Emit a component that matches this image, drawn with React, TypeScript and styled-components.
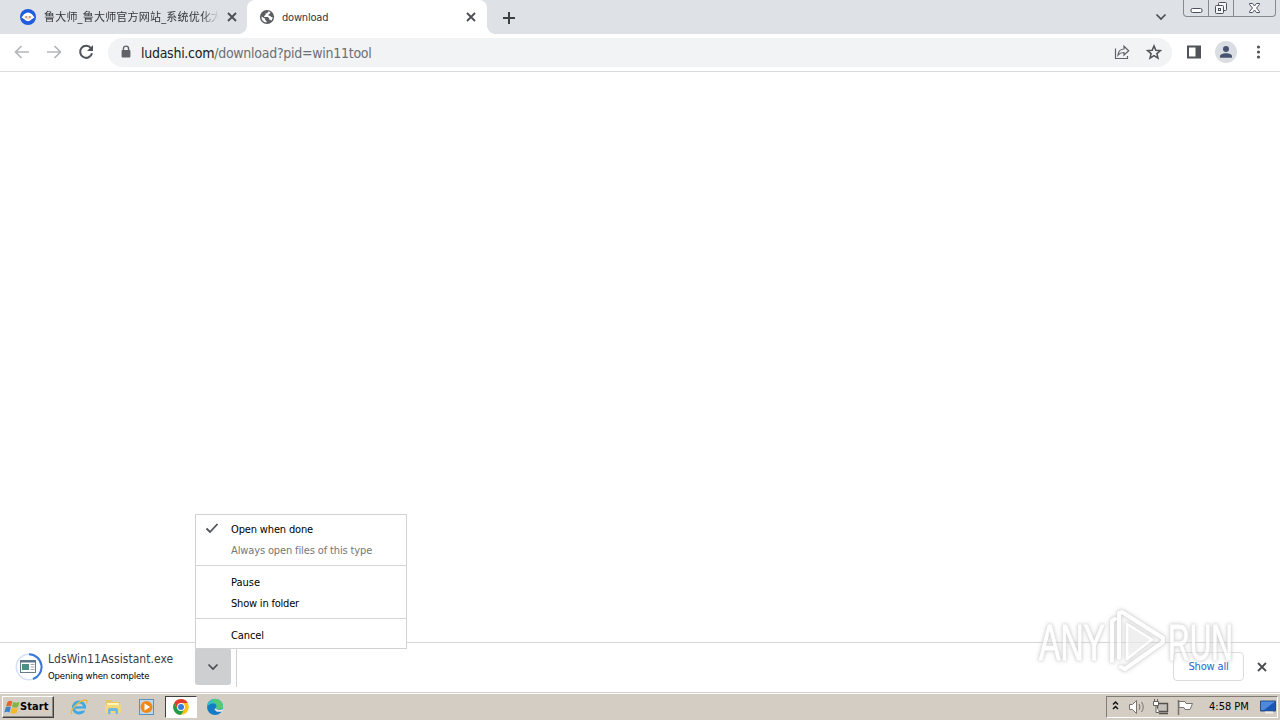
import React from 'react'
import styled, { createGlobalStyle, css } from 'styled-components'

const GlobalStyle = createGlobalStyle`
  * {
    box-sizing: border-box;
  }
  body {
    margin: 0;
    overflow: hidden;
    background: #ffffff;
  }
  svg {
    flex-shrink: 0;
  }
`

/* Desktop */
const Desktop = styled.div`
  position: relative;
  display: flex;
  flex-direction: column;
  width: 1280px;
  height: 720px;
  font-family: 'DejaVu Sans Condensed', 'DejaVu Sans', 'Noto Sans CJK SC', sans-serif;
  font-stretch: condensed;
  color: #000000;
  background: #ffffff;
`
const Label = styled.span<{ size?: number; track?: number; color?: string }>`
  font-size: ${(p) => p.size || 11}px;
  letter-spacing: ${(p) => p.track || 0}px;
  color: ${(p) => p.color || 'inherit'};
  line-height: 16px;
  white-space: nowrap;
`
const Spacer = styled.div`
  flex: 1;
`

/* Tab strip */
const TabStrip = styled.div`
  display: flex;
  height: 34px;
  background: #dee1e6;
`
const Tab = styled.div<{ active?: boolean }>`
  position: relative;
  display: flex;
  align-items: center;
  width: ${(p) => (p.active ? 240 : 247)}px;
  height: 34px;
  padding: 0 ${(p) => (p.active ? 11 : 10)}px 0 ${(p) => (p.active ? 12 : 20)}px;
  ${(p) =>
    p.active &&
    css`
      background: #ffffff;
      border-radius: 8px 8px 0 0;
      &::before,
      &::after {
        content: '';
        position: absolute;
        bottom: 0;
        width: 8px;
        height: 8px;
      }
      &::before {
        left: -8px;
        background: radial-gradient(circle at 0 0, #dee1e6 7.5px, #ffffff 8px);
      }
      &::after {
        right: -8px;
        background: radial-gradient(circle at 100% 0, #dee1e6 7.5px, #ffffff 8px);
      }
    `}
`
const TabTitle = styled.div<{ fade?: boolean }>`
  flex: 1;
  display: flex;
  min-width: 0;
  margin: 0 8px 0 ${(p) => (p.fade ? 8 : 7)}px;
  padding-top: ${(p) => (p.fade ? 2 : 1)}px;
  color: #33363a;
  ${(p) => p.fade && 'mask-image: linear-gradient(90deg, #000 90%, transparent);'}
`
const NewTab = styled.div`
  display: flex;
  align-items: center;
  padding-left: 14px;
`
const TabSearch = styled.div`
  display: flex;
  align-items: center;
  margin-right: 16px;
`
const WindowButtons = styled.div`
  display: flex;
  width: 93px;
  height: 17px;
  margin-right: 4px;
  border: 1px solid #868990;
  border-top: 0;
  border-radius: 0 0 4px 4px;
`
const WindowButton = styled.div<{ width: number }>`
  display: flex;
  align-items: center;
  justify-content: center;
  width: ${(p) => p.width}px;
  & + & {
    border-left: 1px solid #868990;
  }
`

/* Toolbar */
const Toolbar = styled.div`
  display: flex;
  align-items: center;
  height: 38px;
  padding: 0 12px 0 12px;
  border-bottom: 1px solid #d9dbde;
  svg {
    margin-bottom: 2px;
  }
`
const NavIcons = styled.div`
  display: flex;
  gap: 12px;
  width: 96px;
`
const Omnibox = styled.div`
  display: flex;
  align-items: center;
  width: 1064px;
  height: 29px;
  padding: 0 8px 0 10px;
  border-radius: 15px;
  background: #f1f3f4;
`
const Url = styled.div`
  flex: 1;
  display: flex;
  margin-left: 7px;
`
const OmniboxIcons = styled.div`
  display: flex;
  gap: 12px;
`
const ToolbarIcons = styled.div`
  display: flex;
  align-items: center;
  gap: 11px;
  margin-left: 12px;
`

const Page = styled.main`
  flex: 1;
`

/* Download shelf */
const Shelf = styled.div`
  display: flex;
  align-items: center;
  height: 50px;
  padding: 0 13px 2px 0;
  border-top: 1px solid #d5d5d5;
`
const Download = styled.div`
  display: flex;
  align-items: center;
  width: 237px;
  height: 41px;
  padding-left: 15px;
  border-right: 1px solid #d0d0d0;
`
const DownloadText = styled.div`
  display: flex;
  flex-direction: column;
  gap: 1px;
  width: 152px;
  padding: 2px 0 0 5px;
`
const MenuButton = styled.div`
  display: flex;
  align-items: center;
  justify-content: center;
  width: 36px;
  height: 37px;
  border-radius: 3px;
  background: #cecfd0;
`
const ShowAll = styled.div`
  display: flex;
  align-items: center;
  justify-content: center;
  width: 71px;
  height: 29px;
  margin-right: 13px;
  border: 1px solid #dadce0;
  border-radius: 4px;
`

/* Context menu over the shelf */
const Menu = styled.div`
  position: absolute;
  left: 195px;
  top: 514px;
  width: 212px;
  height: 135px;
  padding-top: 4px;
  border: 1px solid #d2d2d2;
  background: #ffffff;
`
const MenuItem = styled.div`
  display: flex;
  align-items: center;
  height: 21px;
`
const Check = styled.div`
  display: flex;
  width: 35px;
  padding: 0 0 3px 9px;
`
const MenuLine = styled.div`
  height: 1px;
  margin: 4px 0 6px;
  background: #d5d5d5;
`

/* Taskbar */
const Taskbar = styled.div`
  display: flex;
  align-items: flex-start;
  height: 28px;
  padding: 3px 2px 0;
  border-top: 1px solid #d4d0c8;
  background: #d4cdc4;
  box-shadow: inset 0 1px #ffffff;
`
const Start = styled.div`
  display: flex;
  align-items: center;
  width: 52px;
  height: 22px;
  padding-left: 1px;
  border: 1px solid;
  border-color: #ffffff #404040 #404040 #ffffff;
  box-shadow: inset -1px -1px #8c8780;
  font-weight: bold;
`
const QuickLaunch = styled.div`
  display: flex;
  margin-left: 8px;
`
const TaskIcon = styled.div<{ pressed?: boolean }>`
  display: flex;
  align-items: center;
  justify-content: center;
  width: 34px;
  height: 22px;
  ${(p) =>
    p.pressed &&
    css`
      width: 32px;
      margin: 0 1px;
      border: 1px solid;
      border-color: #404040 #ffffff #ffffff #404040;
      background: #ffffff;
    `}
`
const Tray = styled.div`
  display: flex;
  align-items: center;
  width: 172px;
  height: 22px;
  padding-left: 4px;
  border: 1px solid;
  border-color: #807c76 #ffffff #ffffff #807c76;
`
const Clock = styled.div`
  display: flex;
  width: 51px;
  margin-left: 16px;
`

const Watermark = styled.svg`
  position: absolute;
  left: 1032px;
  top: 604px;
  overflow: visible;
  opacity: 0.7;
  filter: drop-shadow(0 0 1.5px #b8b8b8) drop-shadow(0 0 2px #d4d4d4);
`

const Cross = () => (
  <svg width="10" height="10" stroke="#4a4d51" strokeWidth="1.8">
    <path d="M1 1l8 8M9 1L1 9" />
  </svg>
)

const Chevron = () => (
  <svg width="12" height="8" fill="none" stroke="#4a4d51" strokeWidth="1.7">
    <path d="M1.5 1.5L6 6l4.5-4.5" />
  </svg>
)

const LdsIcon = () => (
  <svg width="16" height="16">
    <circle cx="8" cy="8" r="8" fill="#1f5bdf" />
    <path d="M1.5 8.5L4 5.2Q8 1.8 12 5.2l2.5 3.3-2.8 1.7Q8 14.5 4.3 10.2z" fill="#fff" />
    <path d="M4.5 7h7v2Q8 12.5 4.5 9z" fill="#f5d9c4" />
    <path d="M5.5 8h1.5M9 8h1.5" stroke="#73544c" />
  </svg>
)

const Globe = () => (
  <svg width="16" height="16">
    <circle cx="8" cy="8" r="7.1" fill="#5a5d61" />
    <path
      d="M9.3 2.6L8.2 4.2H6.6v1.6L5.2 6.9V8h3.6l1.4 1.3v1.4h1.2l.9 1A5.6 5.6 0 0 0 13.6 8l-1.4.1-1.2-1.4H9.6V5.4l1.6-1.1V3.1zM2.4 7.6A5.7 5.7 0 0 0 7.6 13.6v-1.4L6.2 11V9.8z"
      fill="#fff"
    />
  </svg>
)

const Arrow = ({ flip }: { flip?: boolean }) => (
  <svg width="20" height="20" fill="none" stroke="#b4b6b9" strokeWidth="1.7">
    <path d={flip ? 'M3 10h13M10.5 4l6 6-6 6' : 'M17 10H4M9.5 4l-6 6 6 6'} />
  </svg>
)

const Reload = () => (
  <svg width="20" height="20" fill="none" stroke="#505357" strokeWidth="2">
    <path d="M15 6.3A6 6 0 1 0 16 11.2" />
    <path d="M17 3v6h-6z" fill="#505357" stroke="none" />
  </svg>
)

const Lock = () => (
  <svg width="16" height="16">
    <path d="M5.4 7V4.7a2.6 2.6 0 0 1 5.2 0V7" fill="none" stroke="#5f6368" strokeWidth="1.4" />
    <rect x="3.6" y="6" width="8.8" height="7.6" rx="1" fill="#5f6368" />
  </svg>
)

const Share = () => (
  <svg width="20" height="20" fill="none" stroke="#5f6368" strokeWidth="1.2">
    <path d="M3.5 6.5v10h12V14" />
    <path d="M6 13c.5-4 2.5-6 6-6V4.2l4.7 4.6-4.7 4.4v-2.7c-3 0-4.5.7-6 2.5z" />
  </svg>
)

const Star = () => (
  <svg width="20" height="20" fill="none" stroke="#505357" strokeWidth="1.5">
    <path d="M10 3.9l1.8 4.3 4.6.4-3.5 3 1.1 4.6-4-2.5-4 2.5 1.1-4.6-3.5-3 4.6-.4z" />
  </svg>
)

const SidePanel = () => (
  <svg width="20" height="20">
    <path d="M3 3.5h14v13H3zM5 5.5v9h6.5v-9z" fill="#505357" fillRule="evenodd" />
  </svg>
)

const Avatar = () => (
  <svg width="22" height="22">
    <circle cx="11" cy="11" r="11" fill="#dadde2" />
    <circle cx="11" cy="8" r="3" fill="#465270" />
    <path d="M5 16.7v-1.5c0-4 12-4 12 0v1.5z" fill="#465270" />
  </svg>
)

const Dots = () => (
  <svg width="20" height="20" fill="#505357">
    <circle cx="10.5" cy="5" r="1.6" />
    <circle cx="10.5" cy="10" r="1.6" />
    <circle cx="10.5" cy="15" r="1.6" />
  </svg>
)

const FileProgress = () => (
  <svg width="28" height="28" fill="none">
    <circle cx="14" cy="14" r="12.7" stroke="#d3e0f7" strokeWidth="1.5" />
    <path d="M14 1.3a12.7 12.7 0 0 1 4 24.7" stroke="#3679dd" strokeWidth="2" />
    <rect x="5.5" y="7.5" width="15" height="12" fill="#fff" stroke="#6b7b87" />
    <path d="M5 8.5h16" stroke="#597786" strokeWidth="2" />
    <rect x="7" y="11" width="7" height="6" fill="#4b8f85" />
    <path d="M15.5 11.5h4M15.5 14h4M15.5 16.5h4" stroke="#a0a8ae" />
  </svg>
)

const WindowsFlag = () => (
  <svg width="16" height="16">
    <path d="M3.5 3Q6 1 8.2 2.5L7 7.5Q5 6 2 7.5z" fill="#e8632b" />
    <path d="M9 3q3 1.5 6.5 0L14 8q-3 1.5-6 0z" fill="#7eb742" />
    <path d="M1.8 8.3q2.7-1.5 5 0L5.5 13.5Q3 12 .3 13.5z" fill="#3b83d1" />
    <path d="M7.8 8.7q3 1.5 6 0L12.5 14q-3 1.5-6 0z" fill="#f4b929" />
  </svg>
)

const Explorer = () => (
  <svg width="18" height="18" fill="none">
    <circle cx="9" cy="9.5" r="5.6" stroke="#3da9e5" strokeWidth="3" />
    <path d="M5 9.5h9" stroke="#3da9e5" strokeWidth="2.3" />
    <path d="M11 11.6h6" stroke="#d4cdc4" strokeWidth="2" />
    <path d="M2 16C-1 13 8 3 15 2q3 0 1.5 3.5" stroke="#e9b93f" strokeWidth="1.3" />
  </svg>
)

const Folder = () => (
  <svg width="18" height="18">
    <path d="M2 4V2h6l1 2h7v11H2z" fill="#e6c765" />
    <path d="M3 5h12v4H3z" fill="#fff3b5" />
    <path d="M1 7h16v8H1z" fill="#f2d77c" />
    <path d="M4 16v-4q0-2 2-2h6q2 0 2 2v4h-2.5v-3h-5v3z" fill="#70b7df" />
  </svg>
)

const Player = () => (
  <svg width="18" height="18">
    <rect x="1.5" y="1.5" width="14" height="15" fill="#bcd8ee" stroke="#5b91c0" />
    <circle cx="8.5" cy="9" r="6" fill="#f18918" />
    <path d="M6.5 5.5L12 9l-5.5 3.5z" fill="#fff" />
  </svg>
)

const Chrome = () => (
  <svg width="16" height="16">
    <circle cx="8" cy="8" r="7.8" fill="#fbc116" />
    <path d="M1.2 4.1A7.8 7.8 0 0 1 14.8 4.1H8L4.6 10z" fill="#e33b2e" />
    <path d="M1.2 4.1L4.6 10 8 11.9l3.4-1.9L8 15.8A7.8 7.8 0 0 1 1.2 4.1z" fill="#239b4c" />
    <circle cx="8" cy="8" r="3.9" fill="#fff" />
    <circle cx="8" cy="8" r="3" fill="#367be0" />
  </svg>
)

const Edge = () => (
  <svg width="18" height="18">
    <circle cx="9" cy="9" r="8" fill="#167bc6" />
    <path d="M1 9A8 8 0 0 1 17 8.5q0 3-4 3-3 0-3-1.3Q12 6.5 8 5.5 3.5 5 1 9z" fill="#37bfc0" />
    <path d="M9 1q7 0 8 7.5 0 3-4 3-3 0-3-1.3Q12.5 5 5 2.5z" fill="#55ca75" />
    <path d="M10 10.2q0 1.5 4 1.7 1.5 0 2.5-.8l.5.9-1 1.4Q10 15 8.5 11z" fill="#e6ece8" />
  </svg>
)

const TrayIcons = () => (
  <svg width="82" height="18" fill="none">
    <path d="M2 6.5L4.5 4 7 6.5M2 11l2.5-2.5L7 11" stroke="#111" strokeWidth="1.5" />
    <path d="M18.5 6.5h3l4-4v13l-4-4h-3z" fill="#fff" stroke="#77736e" />
    <path d="M28 6q2 3 0 6M30.5 4q3.5 5 0 10" stroke="#77736e" />
    <path d="M46.5 5.5h10v8h-10zM48 15.5h9" fill="#c4c1bc" stroke="#55524e" strokeWidth="1.4" />
    <path d="M42.5 3.5h5v4h-5zM43.5 1v2M46.5 1v2M45 7.5v7h3" fill="#fff" stroke="#66625d" />
    <path d="M67.5 2v15" stroke="#77736e" strokeWidth="1.5" />
    <path d="M68 3.5h6l1 2h6.5L79 11.5h-5l-1-2h-5z" fill="#fff" stroke="#77736e" />
  </svg>
)

const App = () => {
  return (
    <Desktop>
      <GlobalStyle />
      <TabStrip>
        <Tab>
          <LdsIcon />
          <TabTitle fade>
            <Label track={0.2}>鲁大师_鲁大师官方网站_系统优化大</Label>
          </TabTitle>
          <Cross />
        </Tab>
        <Tab active>
          <Globe />
          <TabTitle>
            <Label track={-0.2}>download</Label>
          </TabTitle>
          <Cross />
        </Tab>
        <NewTab>
          <svg width="15" height="15" stroke="#3c4043" strokeWidth="2">
            <path d="M8 2v12M2 8h12" />
          </svg>
        </NewTab>
        <Spacer />
        <TabSearch>
          <Chevron />
        </TabSearch>
        <WindowButtons>
          <WindowButton width={24}>
            <svg width="13" height="16">
              <rect x="1" y="8.5" width="11" height="4" rx="1.5" fill="#fff" stroke="#4b4f5b" />
            </svg>
          </WindowButton>
          <WindowButton width={25}>
            <svg width="14" height="16" fill="#f5f6f8" stroke="#4b4f5b">
              <rect x="4.5" y="2.5" width="8" height="8" rx="1" />
              <rect x="1.5" y="5.5" width="8" height="8" rx="1" />
              <rect x="4.5" y="8.5" width="2" height="2" />
            </svg>
          </WindowButton>
          <WindowButton width={42}>
            <svg width="13" height="16" fill="#fff" stroke="#4b4f5b">
              <path d="M1.5 3.5h3l2 2.5 2-2.5h3v1l-3 3.5 3 3.5v1h-3l-2-2.5-2 2.5h-3v-1l3-3.5-3-3.5z" />
            </svg>
          </WindowButton>
        </WindowButtons>
      </TabStrip>

      <Toolbar>
        <NavIcons>
          <Arrow />
          <Arrow flip />
          <Reload />
        </NavIcons>
        <Omnibox>
          <Lock />
          <Url>
            <Label size={14} track={-0.27} color="#202124">
              ludashi.com
            </Label>
            <Label size={14} track={-0.27} color="#6b6f74">
              /download?pid=win11tool
            </Label>
          </Url>
          <OmniboxIcons>
            <Share />
            <Star />
          </OmniboxIcons>
        </Omnibox>
        <ToolbarIcons>
          <SidePanel />
          <Avatar />
          <Dots />
        </ToolbarIcons>
      </Toolbar>

      <Page />

      <Shelf>
        <Download>
          <FileProgress />
          <DownloadText>
            <Label size={12} track={0.05} color="#3c4043">
              LdsWin11Assistant.exe
            </Label>
            <Label size={9.5} track={-0.15}>
              Opening when complete
            </Label>
          </DownloadText>
          <MenuButton>
            <Chevron />
          </MenuButton>
        </Download>
        <Spacer />
        <ShowAll>
          <Label track={-0.15} color="#1967d2">
            Show all
          </Label>
        </ShowAll>
        <Cross />
      </Shelf>

      <Taskbar>
        <Start>
          <WindowsFlag />
          <Label track={0.1}>Start</Label>
        </Start>
        <QuickLaunch>
          <TaskIcon>
            <Explorer />
          </TaskIcon>
          <TaskIcon>
            <Folder />
          </TaskIcon>
          <TaskIcon>
            <Player />
          </TaskIcon>
          <TaskIcon pressed>
            <Chrome />
          </TaskIcon>
          <TaskIcon>
            <Edge />
          </TaskIcon>
        </QuickLaunch>
        <Spacer />
        <Tray>
          <TrayIcons />
          <Clock>
            <Label>4:58 PM</Label>
          </Clock>
          <svg width="16" height="16">
            <path d="M.5 2h15v10H.5z" fill="#1d57b5" stroke="#274f83" />
            <path d="M1 2.5h14L4 11H1z" fill="#4d8ade" />
            <path d="M5 13.5h8" stroke="#f0eee9" strokeWidth="2" />
          </svg>
        </Tray>
      </Taskbar>

      <Menu>
        <MenuItem>
          <Check>
            <svg width="14" height="12" fill="none" stroke="#505357" strokeWidth="1.8">
              <path d="M1.5 6.5L5 10l7.5-8" />
            </svg>
          </Check>
          <Label track={-0.15}>Open when done</Label>
        </MenuItem>
        <MenuItem>
          <Check />
          <Label track={-0.13} color="#777777">
            Always open files of this type
          </Label>
        </MenuItem>
        <MenuLine />
        <MenuItem>
          <Check />
          <Label>Pause</Label>
        </MenuItem>
        <MenuItem>
          <Check />
          <Label track={-0.2}>Show in folder</Label>
        </MenuItem>
        <MenuLine />
        <MenuItem>
          <Check />
          <Label track={-0.1}>Cancel</Label>
        </MenuItem>
      </Menu>

      <Watermark width="208" height="74" fontFamily="Liberation Sans" fontSize="50" fill="#ffffff" stroke="#ffffff">
        <text x="7" y="56" textLength="66" lengthAdjust="spacingAndGlyphs">
          ANY
        </text>
        <path d="M94 18l28 18-28 19z" fill="#e9e9e9" stroke="none" />
        <g fill="none" strokeWidth="4" strokeLinecap="round" strokeLinejoin="round">
          <path d="M80 57V17l3-2" />
          <path d="M87 54V9l3-1 41 26v4L93 65l-4-2" />
          <path d="M95 55V20l25 15.5z" strokeWidth="2.5" />
        </g>
        <text x="136" y="56" textLength="65" lengthAdjust="spacingAndGlyphs">
          RUN
        </text>
      </Watermark>
    </Desktop>
  )
}

export default App
